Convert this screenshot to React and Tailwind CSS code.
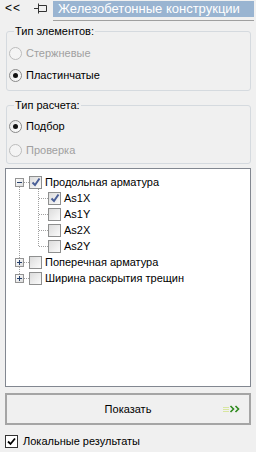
import React from "react";

const FONT = { fontFamily: '"Liberation Sans", Arial, sans-serif' };

function Radio({ checked, disabled, label }) {
  return (
    <div className="flex items-center h-[16px]">
      <span
        className={`w-[13px] h-[13px] rounded-full border flex items-center justify-center ${
          disabled ? "border-[#bcbcbc] bg-[#f4f4f4]" : "border-[#8a8a8a] bg-gradient-to-br from-[#e4e4e4] to-[#ffffff]"
        }`}
      >
        {checked && <span className="w-[5px] h-[5px] rounded-full bg-[#111]" />}
      </span>
      <span className={`ml-[4px] text-[11px] ${disabled ? "text-[#a0a0a0]" : "text-black"}`}>{label}</span>
    </div>
  );
}

function Group({ title, children, className }) {
  return (
    <div className={`relative mx-[6px] w-[245px] border border-[#d5dadf] rounded-[3px] ${className}`}>
      <span className="absolute -top-[8px] left-[7px] px-[1px] bg-[#f0f0f0] text-[11px] leading-[14px] text-black">
        {title}
      </span>
      {children}
    </div>
  );
}

function TreeCheck({ checked }) {
  return (
    <span className="w-[13px] h-[13px] border border-[#8e8f8f] bg-gradient-to-br from-[#dcdcdc] to-[#fbfbfb] flex items-center justify-center shrink-0">
      {checked && (
        <svg width="10" height="10" viewBox="0 0 10 10">
          <path d="M1.5 5.5 L4 8 L8.5 1.5" fill="none" stroke="#4a5f97" strokeWidth="2" />
        </svg>
      )}
    </span>
  );
}

function Expander({ open }) {
  return (
    <span className="w-[9px] h-[9px] border border-[#949494] bg-gradient-to-br from-[#ffffff] to-[#dcdcdc] flex items-center justify-center shrink-0">
      <svg width="7" height="7" viewBox="0 0 7 7">
        <path d="M1 3.5 H6" stroke="#26406c" strokeWidth="1" />
        {!open && <path d="M3.5 1 V6" stroke="#26406c" strokeWidth="1" />}
      </svg>
    </span>
  );
}

function RootRow({ open, checked, label }) {
  return (
    <div className="flex items-center h-[16px] pl-[9px]">
      <Expander open={open} />
      <span className="w-[5px]" />
      <TreeCheck checked={checked} />
      <span className="ml-[3px] text-[11px] text-black whitespace-nowrap">{label}</span>
    </div>
  );
}

function ChildRow({ checked, label }) {
  return (
    <div className="flex items-center h-[16px] pl-[42px]">
      <TreeCheck checked={checked} />
      <span className="ml-[3px] text-[11px] text-black">{label}</span>
    </div>
  );
}

export default function App() {
  return (
    <div className="w-[256px] h-[452px] bg-[#f0f0f0] overflow-hidden" style={FONT}>
      {/* header */}
      <div className="flex items-start h-[21px]">
        <span className="ml-[5px] mt-[1px] text-[12px] leading-[15px] text-black tracking-[1px]">&lt;&lt;</span>
        <svg className="ml-[13px] mt-[3px]" width="13" height="11" viewBox="0 0 13 11">
          <path d="M0 5.5 H4.5 M4.5 0.5 V10.5 M4.5 2.5 H12.5 V8.5 H4.5" fill="none" stroke="#333" strokeWidth="1" />
        </svg>
        <div className="ml-[6px] mt-[1px] w-[201px] flex flex-col">
          <div className="h-[16px] bg-[#99b4d1] text-white text-[13px] leading-[16px] pl-[5px] whitespace-nowrap">
            Железобетонные конструкции
          </div>
          <div className="mt-[3px] h-[1px] bg-[#a0a0a0]" />
        </div>
      </div>

      <Group title="Тип элементов:" className="mt-[10px] h-[60px] pt-[13px] pl-[2px]">
        <Radio disabled label="Стержневые" />
        <div className="h-[6px]" />
        <Radio checked label="Пластинчатые" />
      </Group>

      <Group title="Тип расчета:" className="mt-[14px] h-[59px] pt-[12px] pl-[2px]">
        <Radio checked label="Подбор" />
        <div className="h-[8px]" />
        <Radio disabled label="Проверка" />
      </Group>

      <div className="relative mt-[4px] ml-[5px] w-[246px] h-[219px] border border-[#828790] bg-white pt-[5px]">
        <svg className="absolute left-0 top-0" width="244" height="217" viewBox="0 0 244 217">
          <g stroke="#a0a0a0" strokeWidth="1" strokeDasharray="1 1" fill="none">
            <path d="M13.5 18 V109" />
            <path d="M18 13.5 H23 M18 93.5 H23 M18 109.5 H23" />
            <path d="M32.5 20 V77" />
            <path d="M33 29.5 H42 M33 45.5 H42 M33 61.5 H42 M33 77.5 H42" />
          </g>
        </svg>
        <div className="relative flex flex-col">
          <RootRow open checked label="Продольная арматура" />
          <ChildRow checked label="As1X" />
          <ChildRow label="As1Y" />
          <ChildRow label="As2X" />
          <ChildRow label="As2Y" />
          <RootRow label="Поперечная арматура" />
          <RootRow label="Ширина раскрытия трещин" />
        </div>
      </div>

      <button className="mt-[6px] ml-[5px] w-[246px] h-[32px] border-2 border-[#a5a5a5] bg-[#f0f0f0] flex items-center relative">
        <span className="flex-1 text-center text-[11px] text-black">Показать</span>
        <svg className="absolute right-[7px] top-[9px]" width="19" height="10" viewBox="0 0 19 10">
          <path d="M0 3.5 H6 M0 5.5 H6 M0 7.5 H6" stroke="#d8e6a0" strokeWidth="1" />
          <path d="M7.5 2 L10.5 5 L7.5 8" fill="none" stroke="#2f8a1e" strokeWidth="1.6" />
          <path d="M12.5 2 L15.5 5 L12.5 8" fill="none" stroke="#2f8a1e" strokeWidth="1.6" />
        </svg>
      </button>

      <div className="mt-[8px] ml-[5px] flex items-center h-[16px]">
        <span className="w-[13px] h-[13px] border border-[#333] bg-white flex items-center justify-center">
          <svg width="9" height="9" viewBox="0 0 9 9">
            <path d="M1 4.5 L3.5 7 L8 1.5" fill="none" stroke="#000" strokeWidth="1.8" />
          </svg>
        </span>
        <span className="ml-[5px] text-[11px] text-black">Локальные результаты</span>
      </div>
    </div>
  );
}
